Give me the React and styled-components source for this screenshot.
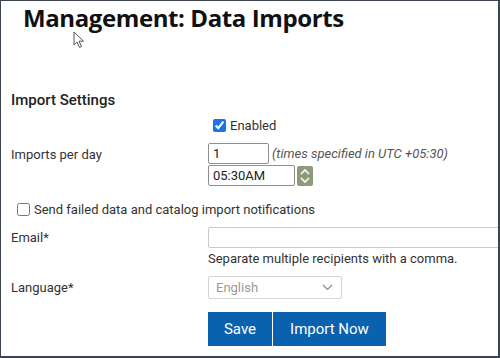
import React from 'react';
import styled, { createGlobalStyle } from 'styled-components';

const GlobalStyle = createGlobalStyle`
  html, body {
    margin: 0;
    padding: 0;
    background: #ffffff;
  }
  * {
    box-sizing: border-box;
  }
`

const Frame = styled.div`
  position: relative;
  width: 500px;
  height: 358px;
  overflow: hidden;
  border-style: solid;
  border-color: #3c4351;
  border-width: 1px 2px 2px 1px;
  font-family: Roboto, 'Liberation Sans', sans-serif;
  color: #222;
`

const Title = styled.h1`
  margin: 0;
  padding: 0 0 0 22px;
  height: 34px;
  font-family: 'Open Sans', 'Liberation Sans', sans-serif;
  font-weight: 700;
  font-size: 24px;
  line-height: 33px;
  letter-spacing: -0.4px;
  color: #111;
`

const Cursor = styled.svg`
  position: absolute;
  left: 72px;
  top: 30px;
`

const Content = styled.div`
  padding: 56px 0 0 10px;
`

const SectionTitle = styled.h2`
  margin: 0 0 9px 0;
  font-size: 15px;
  font-weight: 500;
  line-height: 18px;
  color: #222;
`

const Row = styled.div`
  display: grid;
  grid-template-columns: 197px 1fr;
  align-items: ${props => props.$align || 'center'};
  margin-bottom: ${props => props.$gap || 0}px;
`

const Label = styled.span`
  font-size: 13px;
  color: #333;
`

const Stack = styled.div`
  display: flex;
  flex-direction: column;
  gap: ${props => props.$gap || 1}px;
`

const Inline = styled.div`
  display: flex;
  align-items: center;
  gap: ${props => props.$gap || 3}px;
`

const CheckLabel = styled.label`
  display: flex;
  align-items: center;
  gap: 4px;
  font-size: 13px;
  color: #333;
  padding-left: ${props => props.$indent || 0}px;
`

const Check = styled.input`
  margin: 0;
  width: 13px;
  height: 13px;
  accent-color: #1a73e8;
`

const TextInput = styled.input`
  width: ${props => props.$width}px;
  height: 21px;
  margin: 0;
  padding: 1px 4px;
  font-family: Roboto, 'Liberation Sans', sans-serif;
  font-size: 13px;
  color: #222;
  border: 1px solid #8f8f8f;
  border-radius: 2px;
  background: #fff;
`

const WideInput = styled.input`
  width: 320px;
  height: 21px;
  margin: 0;
  border: 1px solid #c9c9c9;
  border-radius: 2px;
  background: #fff;
`

const Hint = styled.span`
  font-size: 13px;
  font-style: ${props => props.$italic ? 'italic' : 'normal'};
  color: ${props => props.$italic ? '#555' : '#333'};
`

const Spinner = styled.div`
  width: 16px;
  height: 20px;
  background: #8e9b7b;
  border-radius: 2px;
  display: flex;
  flex-direction: column;
  align-items: center;
  justify-content: center;
  gap: 2px;
`

const SelectBox = styled.div`
  width: 134px;
  height: 23px;
  display: flex;
  align-items: center;
  justify-content: space-between;
  padding: 0 8px 0 7px;
  border: 1px solid #d4d4d4;
  border-radius: 2px;
  font-size: 13px;
  color: #9a9a9a;
`

const ButtonBar = styled.div`
  display: flex;
  gap: 1px;
`

const Button = styled.button`
  width: ${props => props.$width}px;
  height: 34px;
  margin: 0;
  border: none;
  background: #0a61ae;
  color: #fff;
  font-family: Roboto, 'Liberation Sans', sans-serif;
  font-size: 15px;
  cursor: pointer;
`

const Chevron = ({ up }) => (
  <svg width="10" height="6" viewBox="0 0 10 6">
    <path d={up ? 'M1 5 L5 1 L9 5' : 'M1 1 L5 5 L9 1'} fill="none" stroke="#fff" strokeWidth="1.6" />
  </svg>
)

const App = () => {
  return (
    <Frame>
      <GlobalStyle />
      <Title>Management: Data Imports</Title>
      <Cursor width="12" height="18" viewBox="0 0 12 18">
        <path d="M1 1 L1 14 L4 11 L6.5 16.5 L8.5 15.6 L6 10.2 L10.5 10.2 Z" fill="#fff" stroke="#555" strokeWidth="1" strokeLinejoin="round" />
      </Cursor>

      <Content>
        <SectionTitle>Import Settings</SectionTitle>

        <Row $gap={10}>
          <span />
          <CheckLabel $indent={5}>
            <Check type="checkbox" defaultChecked />
            Enabled
          </CheckLabel>
        </Row>

        <Row $align="start" $gap={16}>
          <Label style={{ paddingTop: 4 }}>Imports per day</Label>
          <Stack $gap={1}>
            <Inline $gap={3}>
              <TextInput $width={61} defaultValue="1" />
              <Hint $italic>(times specified in UTC +05:30)</Hint>
            </Inline>
            <Inline $gap={2}>
              <TextInput $width={87} defaultValue="05:30AM" />
              <Spinner>
                <Chevron up />
                <Chevron />
              </Spinner>
            </Inline>
          </Stack>
        </Row>

        <Row $gap={10}>
          <CheckLabel $indent={6} style={{ gridColumn: '1 / 3' }}>
            <Check type="checkbox" />
            Send failed data and catalog import notifications
          </CheckLabel>
        </Row>

        <Row $align="start" $gap={10}>
          <Label style={{ paddingTop: 3 }}>Email*</Label>
          <Stack $gap={3}>
            <WideInput type="text" />
            <Hint>Separate multiple recipients with a comma.</Hint>
          </Stack>
        </Row>

        <Row $gap={13}>
          <Label>Language*</Label>
          <SelectBox>
            English
            <svg width="11" height="7" viewBox="0 0 11 7">
              <path d="M1 1 L5.5 5.5 L10 1" fill="none" stroke="#888" strokeWidth="1.2" />
            </svg>
          </SelectBox>
        </Row>

        <Row>
          <span />
          <ButtonBar>
            <Button $width={64}>Save</Button>
            <Button $width={113}>Import Now</Button>
          </ButtonBar>
        </Row>
      </Content>
    </Frame>
  );
}

export default App;
